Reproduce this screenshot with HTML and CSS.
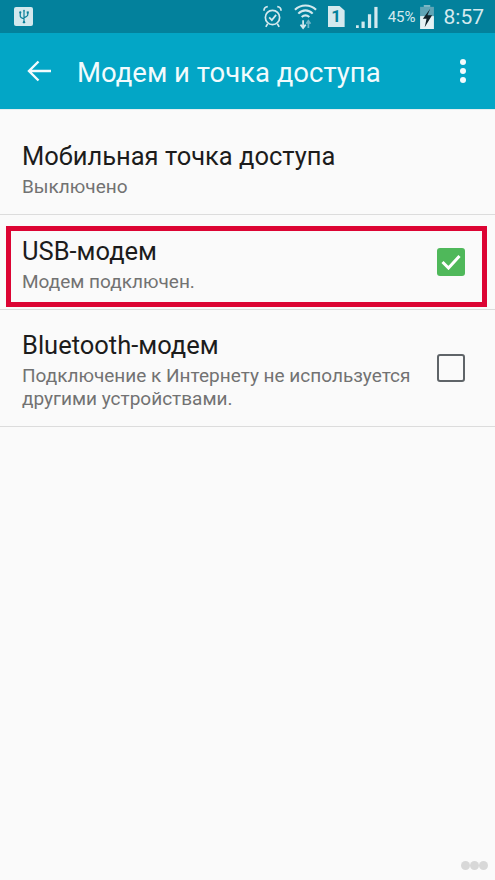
FILE: index.html
```html
<!DOCTYPE html>
<html lang="ru">
<head>
    <meta charset="UTF-8">
    <meta name="viewport" content="width=device-width, initial-scale=1.0">
    <title>Модем и точка доступа</title>
    <link rel="stylesheet" href="styles.css">
</head>
<body>

    <!-- Status bar -->
    <div class="status-bar">
        <div class="usb-badge">
            <svg width="16" height="20" viewBox="0 0 16 20" fill="none" stroke="#0a7f99" stroke-width="1.6">
                <path d="M8 2V18M3 5V9.5C3 11 4 11.6 8 13M13 5V8C13 9.5 12 10 8 11.5"/>
                <path d="M8 0.5L6.4 3H9.6Z" fill="#0a7f99" stroke="none"/>
                <circle cx="3" cy="4.5" r="1.5" fill="#0a7f99" stroke="none"/>
                <rect x="11.6" y="3.2" width="2.8" height="2.8" fill="#0a7f99" stroke="none"/>
                <circle cx="8" cy="17.5" r="1.6" fill="#0a7f99" stroke="none"/>
            </svg>
        </div>
        <div class="status-right">
            <svg class="st-alarm" viewBox="0 0 20 24" fill="none" stroke="#d4e9ee" stroke-width="1.800">
                <circle cx="10" cy="13" r="7.500"/>
                <path d="M6.500 13L9.300 15.800L13.800 10.300"/>
                <path d="M1 6C1 3.500 2.500 1.500 5 1.500M19 6C19 3.500 17.500 1.500 15 1.500M5 19.500L3 23M15 19.500L17 23"/>
            </svg>
            <svg class="st-wifi" viewBox="0 0 24 28" fill="none" stroke="#d4e9ee" stroke-width="2.2">
                <path d="M1 7C7 1 17 1 23 7M4.500 11C9 6.500 15 6.500 19.500 11M8 14.500C10.500 12.300 13.500 12.300 16 14.500"/>
                <path d="M9.500 18V25M6.800 22.500L9.500 26L12.200 22.500" stroke-width="1.800"/>
                <path d="M15 26V19M12.800 21.500L15 18.500L17.200 21.500" stroke="#6fb6c8" stroke-width="1.800"/>
            </svg>
            <div class="st-sim">1</div>
            <svg class="st-signal" viewBox="0 0 24 24" fill="#d4e9ee">
                <rect x="0" y="21" width="3" height="3"/>
                <rect x="6" y="17" width="3.500" height="7"/>
                <rect x="13" y="9" width="3.500" height="15"/>
                <rect x="20" y="1" width="3.500" height="23"/>
            </svg>
            <span class="st-percent">45%</span>
            <svg class="st-battery" viewBox="0 0 15 26">
                <rect x="4" y="0" width="7" height="3" fill="#7fb9c6"/>
                <rect x="0" y="2" width="15" height="10" fill="#5fa5b6"/>
                <rect x="0" y="12" width="15" height="14" fill="#e6f2f4"/>
                <path d="M11 4L3 15H7L5 24L13 11H8Z" fill="#10222a"/>
            </svg>
            <span class="st-time">8:57</span>
        </div>
    </div>

    <!-- App bar -->
    <div class="app-bar">
        <svg class="back-icon" width="24" height="22" viewBox="0 0 24 22" fill="none" stroke="#f2fbfd" stroke-width="2.400">
            <path d="M24 11H2M11.500 1.500L2 11L11.500 20.500"/>
        </svg>
        <h1 class="app-title">Модем и точка доступа</h1>
        <div class="more-icon"><span></span><span></span><span></span></div>
    </div>

    <!-- Settings list -->
    <div class="list">
        <div class="row row-hotspot">
            <div class="row-text">
                <div class="row-title">Мобильная точка доступа</div>
                <div class="row-sub">Выключено</div>
            </div>
        </div>
        <div class="row row-usb">
            <div class="row-text">
                <div class="row-title">USB-модем</div>
                <div class="row-sub">Модем подключен.</div>
            </div>
            <div class="checkbox checked">
                <svg width="20" height="16" viewBox="0 0 20 16" fill="none" stroke="white" stroke-width="3">
                    <path d="M1.500 8L7.500 14L18.500 2"/>
                </svg>
            </div>
            <div class="highlight"></div>
        </div>
        <div class="row row-bt">
            <div class="row-text">
                <div class="row-title">Bluetooth-модем</div>
                <div class="row-sub">Подключение к Интернету не используется другими устройствами.</div>
            </div>
            <div class="checkbox"></div>
        </div>
    </div>

    <!-- Watermark -->
    <div class="watermark"><span></span><span></span><span></span></div>

</body>
</html>
```

FILE: styles.css
```css
* {
    margin: 0;
    padding: 0;
    box-sizing: border-box;
    font-family: Roboto, "Noto Sans", sans-serif;
}

body {
    width: 495px;
    height: 880px;
    overflow: hidden;
    position: relative;
    background: #fafafa;
}

/* Status bar */
.status-bar {
    height: 33px;
    background: #03819c;
    display: flex;
    align-items: center;
    justify-content: space-between;
    padding: 0 11px 0 14px;
}

.usb-badge {
    width: 19px;
    height: 19px;
    background: #d3e8ed;
    border-radius: 2px;
    display: flex;
    align-items: center;
    justify-content: center;
}

.usb-badge svg {
    width: 12px;
    height: 15px;
}

.status-right {
    display: flex;
    align-items: center;
}

.st-alarm {
    width: 19px;
    height: 23px;
    margin-right: 12px;
}

.st-wifi {
    width: 23px;
    height: 27px;
    margin-right: 11px;
}

.st-sim {
    width: 17px;
    height: 21px;
    background: #d4e9ee;
    color: #03819c;
    font-size: 17px;
    font-weight: 700;
    line-height: 21px;
    text-align: center;
    clip-path: polygon(0 0, 70% 0, 100% 22%, 100% 100%, 0 100%);
    margin-right: 11px;
}

.st-signal {
    width: 22px;
    height: 22px;
    margin-right: 10px;
}

.st-percent {
    color: #d4e9ee;
    font-size: 15px;
    margin-right: 4px;
}

.st-battery {
    width: 14px;
    height: 24px;
    margin-right: 10px;
}

.st-time {
    color: #d4e9ee;
    font-size: 21px;
}

/* App bar */
.app-bar {
    height: 77px;
    background: #03a6c6;
    display: flex;
    align-items: center;
    padding: 0 0 0 27px;
    border-bottom: 1px solid #e4eef0;
}

.back-icon {
    margin-right: 26px;
}

.app-title {
    flex: 1;
    font-size: 27.5px;
    font-weight: 400;
    color: #f2fbfd;
    padding-top: 3px;
}

.more-icon {
    display: flex;
    flex-direction: column;
    gap: 3px;
    margin-right: 29px;
}

.more-icon span {
    width: 6px;
    height: 6px;
    border-radius: 50%;
    background: #f2fbfd;
}

/* List */
.row {
    position: relative;
    display: flex;
    align-items: center;
    justify-content: space-between;
    padding: 0 30px 0 22px;
    border-bottom: 1px solid #dcdcdc;
}

.row-hotspot {
    height: 105px;
}

.row-hotspot .row-text {
    padding-top: 14px;
}

.row-usb {
    height: 95px;
}

.row-usb .row-text {
    padding-top: 3px;
}

.row-bt {
    height: 117px;
}

.row-bt .row-text {
    padding-top: 3px;
}

.row-title {
    font-size: 25.5px;
    color: #1c1c1c;
    line-height: 32px;
}

.row-sub {
    font-size: 19px;
    color: #727272;
    line-height: 23px;
    margin-top: 3px;
    max-width: 400px;
}

.checkbox {
    width: 28px;
    height: 28px;
    flex-shrink: 0;
    border: 2px solid #5f6468;
    border-radius: 3px;
    display: flex;
    align-items: center;
    justify-content: center;
}

.checkbox.checked {
    background: #4fb85a;
    border: none;
}

.highlight {
    position: absolute;
    left: 6px;
    top: 11px;
    width: 481px;
    height: 81px;
    border: 5px solid #dc0433;
}

/* Watermark */
.watermark {
    position: absolute;
    right: 7px;
    bottom: 10px;
    display: flex;
}

.watermark span {
    width: 9px;
    height: 9px;
    border-radius: 50%;
    background: #d8d8d8;
}
```
